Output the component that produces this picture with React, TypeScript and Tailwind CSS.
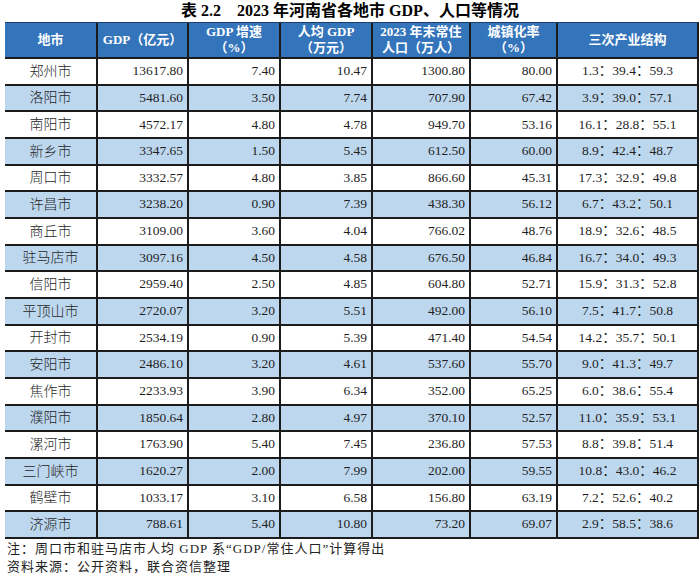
const rows: string[][] = [
  ['郑州市', '13617.80', '7.40', '10.47', '1300.80', '80.00', '1.3：39.4：59.3'],
  ['洛阳市', '5481.60', '3.50', '7.74', '707.90', '67.42', '3.9：39.0：57.1'],
  ['南阳市', '4572.17', '4.80', '4.78', '949.70', '53.16', '16.1：28.8：55.1'],
  ['新乡市', '3347.65', '1.50', '5.45', '612.50', '60.00', '8.9：42.4：48.7'],
  ['周口市', '3332.57', '4.80', '3.85', '866.60', '45.31', '17.3：32.9：49.8'],
  ['许昌市', '3238.20', '0.90', '7.39', '438.30', '56.12', '6.7：43.2：50.1'],
  ['商丘市', '3109.00', '3.60', '4.04', '766.02', '48.76', '18.9：32.6：48.5'],
  ['驻马店市', '3097.16', '4.50', '4.58', '676.50', '46.84', '16.7：34.0：49.3'],
  ['信阳市', '2959.40', '2.50', '4.85', '604.80', '52.71', '15.9：31.3：52.8'],
  ['平顶山市', '2720.07', '3.20', '5.51', '492.00', '56.10', '7.5：41.7：50.8'],
  ['开封市', '2534.19', '0.90', '5.39', '471.40', '54.54', '14.2：35.7：50.1'],
  ['安阳市', '2486.10', '3.20', '4.61', '537.60', '55.70', '9.0：41.3：49.7'],
  ['焦作市', '2233.93', '3.90', '6.34', '352.00', '65.25', '6.0：38.6：55.4'],
  ['濮阳市', '1850.64', '2.80', '4.97', '370.10', '52.57', '11.0：35.9：53.1'],
  ['漯河市', '1763.90', '5.40', '7.45', '236.80', '57.53', '8.8：39.8：51.4'],
  ['三门峡市', '1620.27', '2.00', '7.99', '202.00', '59.55', '10.8：43.0：46.2'],
  ['鹤壁市', '1033.17', '3.10', '6.58', '156.80', '63.19', '7.2：52.6：40.2'],
  ['济源市', '788.61', '5.40', '10.80', '73.20', '69.07', '2.9：58.5：38.6'],
]

const headers: string[][] = [
  ['地市'],
  ['GDP（亿元）'],
  ['GDP 增速', '（%）'],
  ['人均 GDP', '（万元）'],
  ['2023 年末常住', '人口（万人）'],
  ['城镇化率', '（%）'],
  ['三次产业结构'],
]

const serif = "font-['Liberation_Serif','Noto_Sans_CJK_SC',serif]"

const App = () => {
  return (
    <div className={`w-[700px] h-[576px] bg-white text-[#1f1f1f] ${serif}`}>
      <div className="h-[22px] flex items-center justify-center text-[16px] font-bold text-black">
        <span>表 2.2</span>
        <span className="ml-[16px]">2023 年河南省各地市 GDP、人口等情况</span>
      </div>
      <div className="ml-[5px] w-[694px] bg-[#1c1c1c] border-t border-t-[#1c3d66] pb-[2px] pr-[2px] grid grid-cols-[91px_89px_90px_90px_96px_85px_139px] grid-rows-[34px_repeat(18,24.67px)] gap-[2px]">
        {headers.map((h, i) => (
          <div
            key={i}
            className="bg-[#3474bb] text-white font-bold text-[13px] leading-[16px] flex flex-col items-center justify-center"
          >
            {h.map((line, j) => (
              <span key={j}>{line}</span>
            ))}
          </div>
        ))}
        {rows.map((r, i) =>
          r.map((cell, j) => (
            <div
              key={i + '-' + j}
              className={`${i % 2 == 1 ? 'bg-[#bdd7ee]' : 'bg-white'} flex items-center`}
            >
              {j == 0 ? (
                <span className="w-full text-center text-[14px] font-light">{cell}</span>
              ) : j == 6 ? (
                <span className="w-full text-center text-[13.5px]">{cell}</span>
              ) : (
                <span className="w-full text-right pr-[4px] text-[13.5px]">{cell}</span>
              )}
            </div>
          )),
        )}
      </div>
      <div className="pl-[7px] pt-[1px] text-[13px] leading-[18px] tracking-[1px] text-[#222]">
        <p>注：周口市和驻马店市人均 GDP 系“GDP/常住人口”计算得出</p>
        <p>资料来源：公开资料，联合资信整理</p>
      </div>
    </div>
  )
}

export default App
